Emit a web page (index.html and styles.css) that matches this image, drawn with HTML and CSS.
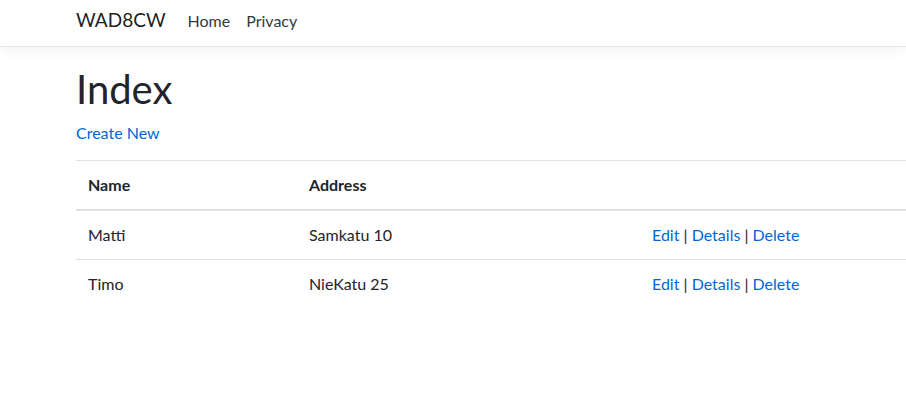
FILE: index.html
```html
<!DOCTYPE html>
<html lang="en">
<head>
<meta charset="utf-8">
<title>Index - WAD8CW</title>
<link rel="stylesheet" href="styles.css">
</head>
<body>
<header class="navbar">
  <div class="container nav-inner">
    <a class="brand" href="#">WAD8CW</a>
    <nav class="nav-links">
      <a class="nav-link" href="#">Home</a>
      <a class="nav-link" href="#">Privacy</a>
    </nav>
  </div>
</header>
<main class="container main">
  <h1 class="title">Index</h1>
  <p class="create"><a href="#">Create New</a></p>
  <table class="table">
    <thead>
      <tr>
        <th class="col-name">Name</th>
        <th class="col-addr">Address</th>
        <th></th>
      </tr>
    </thead>
    <tbody>
      <tr>
        <td>Matti</td>
        <td>Samkatu 10</td>
        <td><a href="#">Edit</a> | <a href="#">Details</a> | <a href="#">Delete</a></td>
      </tr>
      <tr>
        <td>Timo</td>
        <td>NieKatu 25</td>
        <td><a href="#">Edit</a> | <a href="#">Details</a> | <a href="#">Delete</a></td>
      </tr>
    </tbody>
  </table>
</main>
</body>
</html>
```

FILE: styles.css
```css
html, body {
  margin: 0;
  padding: 0;
  background: #fff;
  overflow: hidden;
}
body {
  font-family: Lato, "Noto Sans", sans-serif;
  font-size: 16px;
  line-height: 1.5;
  color: #212529;
}
a {
  color: #0366d6;
  text-decoration: none;
}
.container {
  padding-left: 76px;
  box-sizing: border-box;
}
.navbar {
  height: 46px;
  border-bottom: 1px solid #e5e5e5;
  box-shadow: 0 4px 12px rgba(0, 0, 0, 0.05);
  background: #fff;
}
.nav-inner {
  display: flex;
  align-items: flex-start;
  height: 46px;
  padding-top: 5px;
}
.brand {
  font-size: 19px;
  color: rgba(0, 0, 0, 0.9);
  margin-right: 14px;
  line-height: 30px;
}
.nav-links {
  display: flex;
  margin-top: 4px;
}
.nav-link {
  color: #343a40;
  padding: 0 8px;
  line-height: 24px;
}
.main {
  padding-top: 18px;
}
.title {
  font-size: 40px;
  font-weight: 400;
  line-height: 1.2;
  margin: 0 0 8px 0;
}
.create {
  margin: 0 0 15px 0;
}
.table {
  width: 1110px;
  border-collapse: collapse;
  table-layout: fixed;
}
.table th, .table td {
  text-align: left;
  padding: 12px;
  border-top: 1px solid #dee2e6;
  vertical-align: top;
}
.table thead th {
  border-bottom: 2px solid #dee2e6;
  font-weight: 700;
}
.col-name { width: 197px; }
.col-addr { width: 319px; }
```
